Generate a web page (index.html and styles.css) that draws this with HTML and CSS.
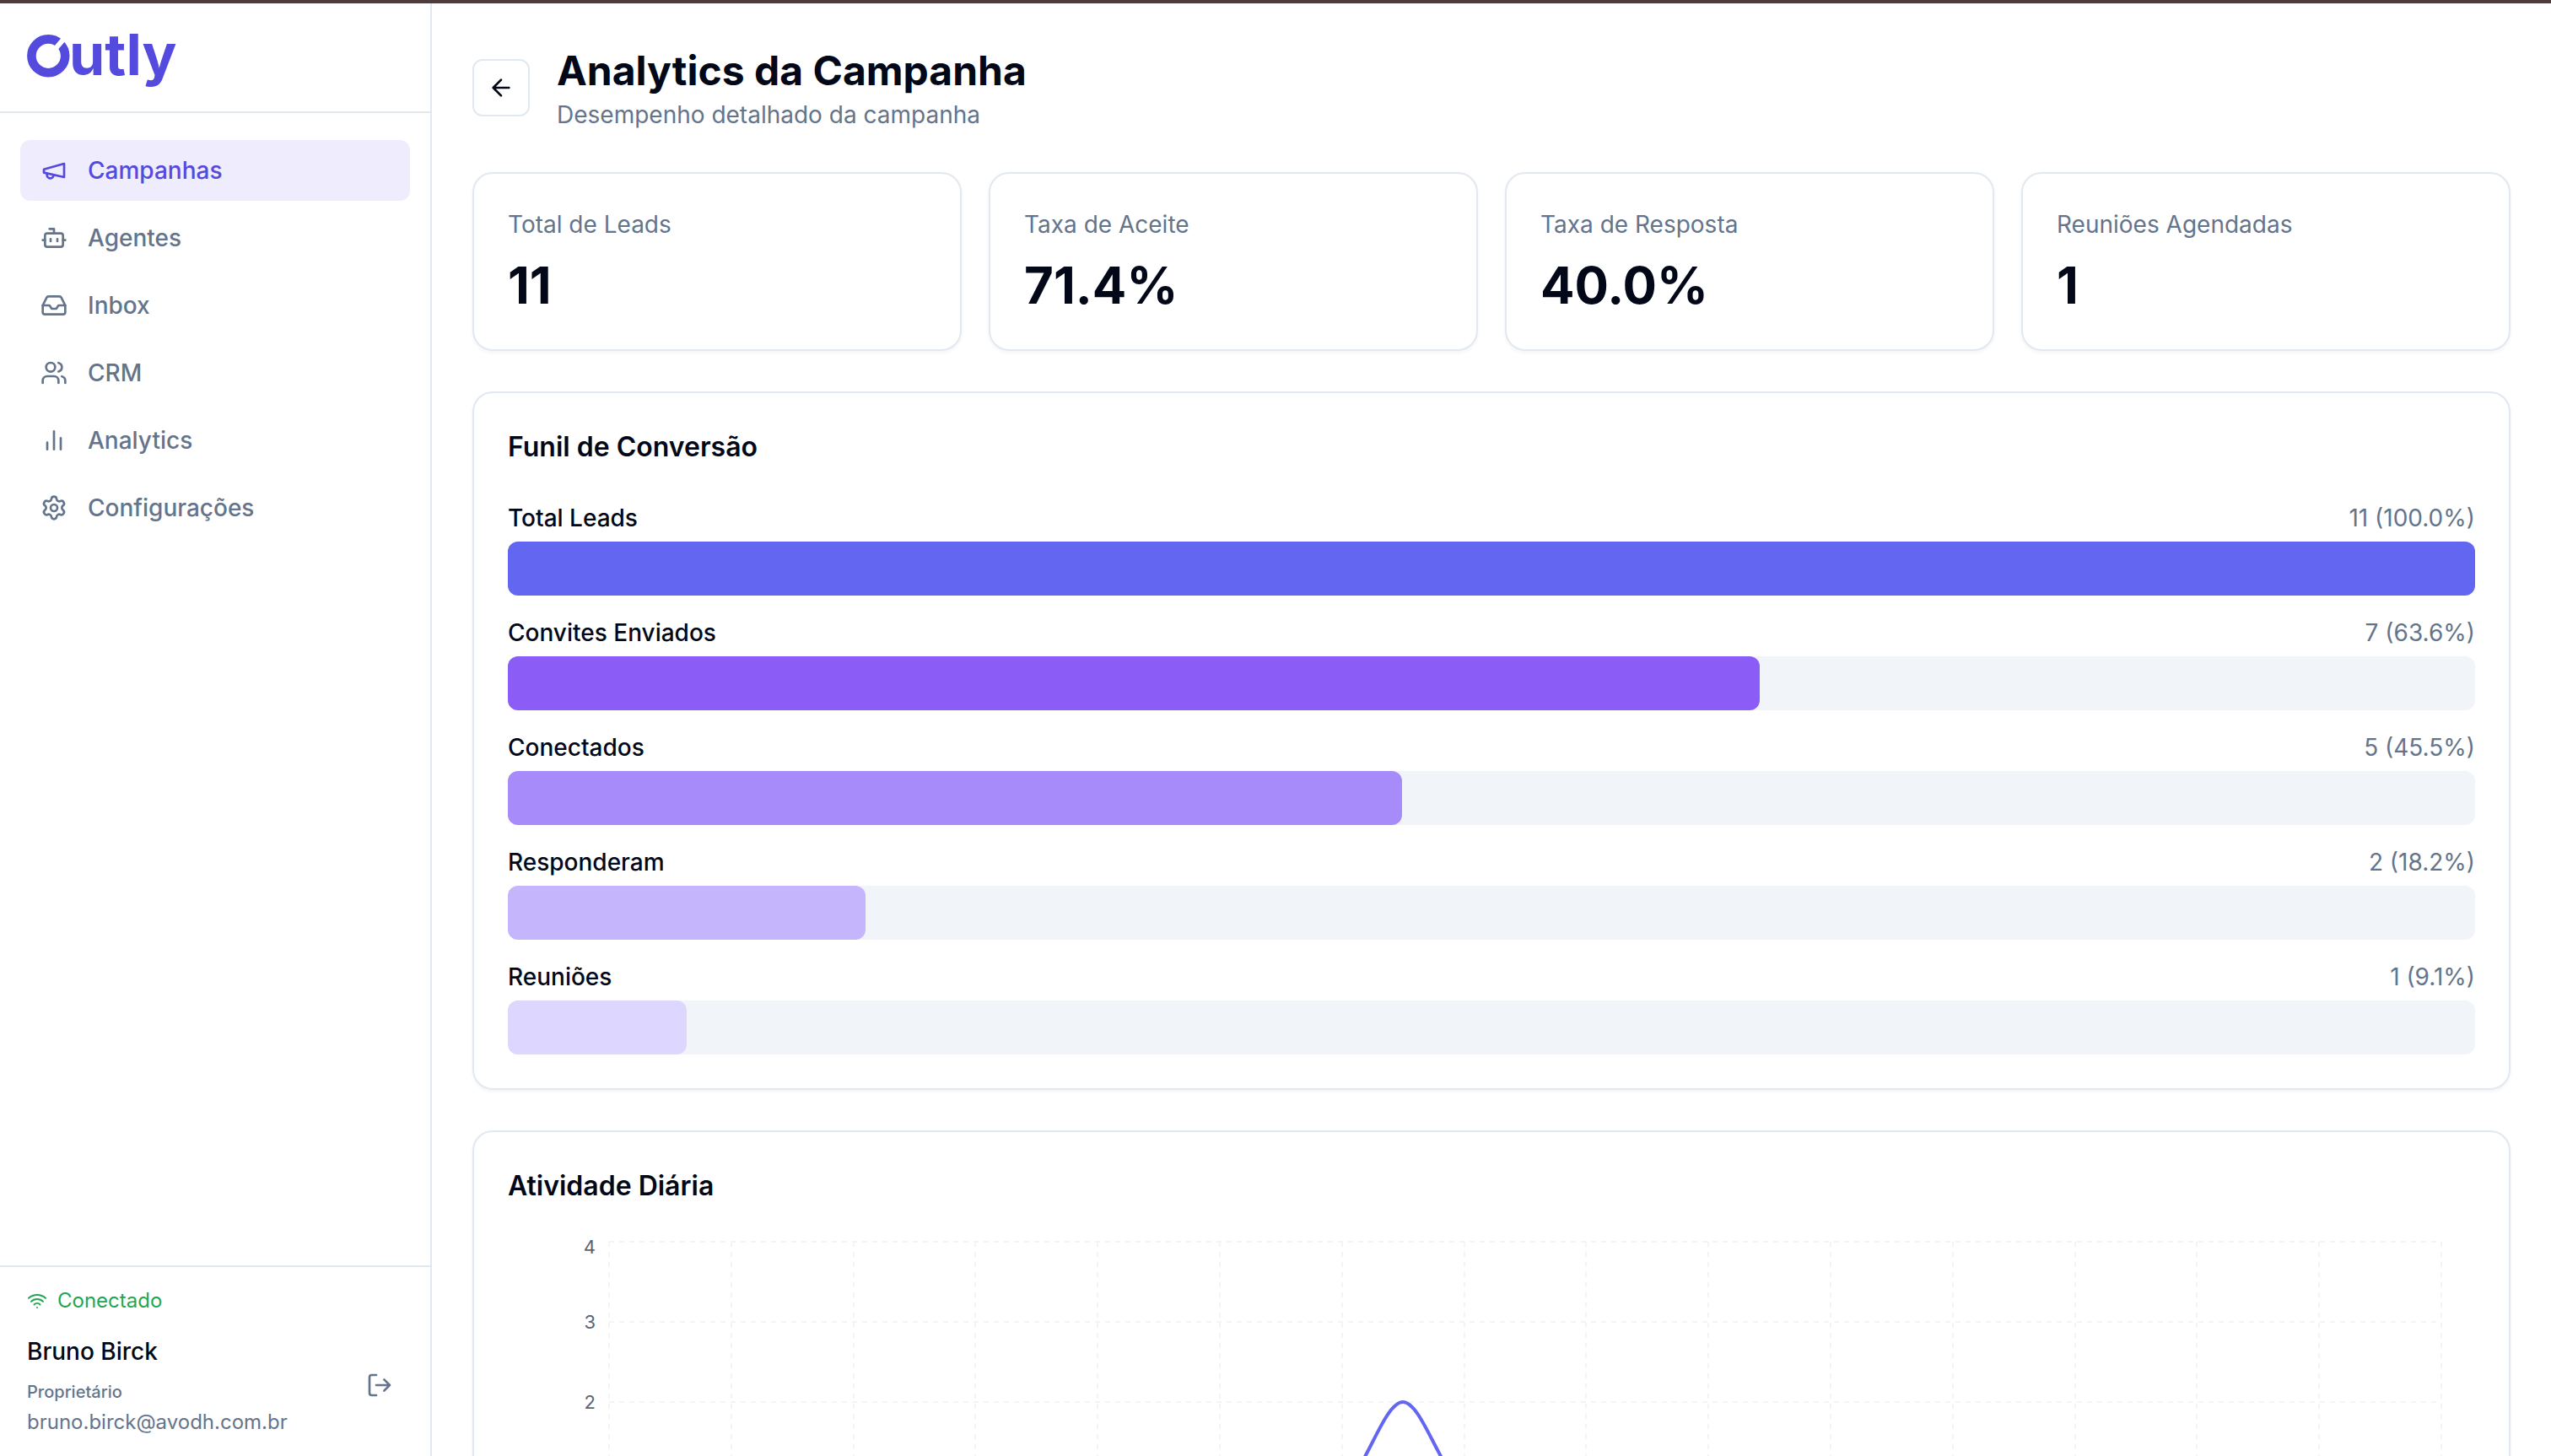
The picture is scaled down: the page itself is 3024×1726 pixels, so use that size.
FILE: index.html
```html
<!DOCTYPE html>
<html lang="pt-BR">
  <head>
    <meta charset="UTF-8" />
    <meta name="viewport" content="width=device-width, initial-scale=1.0" />
    <title>Outly</title>
    <link rel="stylesheet" href="styles.css">
  </head>
  <body>
    <aside class="sidebar">
      <div class="brand">
        <svg class="logo" viewBox="0 0 192 64">
          <circle class="logo-ring" cx="25.3" cy="30.3" r="19.9" />
          <path class="logo-cut" d="M33 22.5L45 8.5" />
          <text class="logo-text" x="50" y="53">utly</text>
        </svg>
      </div>

      <nav class="nav">
        <a href="#" class="nav-link active">
          <svg class="icon" viewBox="0 0 24 24"><path d="m3 11 18-5v12L3 14v-3z" /><path d="M11.6 16.8a3 3 0 1 1-5.8-1.6" /></svg>
          Campanhas
        </a>
        <a href="#" class="nav-link">
          <svg class="icon" viewBox="0 0 24 24"><path d="M12 8V4H8" /><rect width="16" height="12" x="4" y="8" rx="2" /><path d="M2 14h2M20 14h2M15 13v2M9 13v2" /></svg>
          Agentes
        </a>
        <a href="#" class="nav-link">
          <svg class="icon" viewBox="0 0 24 24"><path d="M22 12h-6l-2 3h-4l-2-3H2" /><path d="M5.45 5.11 2 12v6a2 2 0 0 0 2 2h16a2 2 0 0 0 2-2v-6l-3.45-6.89A2 2 0 0 0 16.76 4H7.24a2 2 0 0 0-1.79 1.11z" /></svg>
          Inbox
        </a>
        <a href="#" class="nav-link">
          <svg class="icon" viewBox="0 0 24 24"><path d="M16 21v-2a4 4 0 0 0-4-4H6a4 4 0 0 0-4 4v2" /><circle cx="9" cy="7" r="4" /><path d="M22 21v-2a4 4 0 0 0-3-3.87M16 3.13a4 4 0 0 1 0 7.75" /></svg>
          CRM
        </a>
        <a href="#" class="nav-link">
          <svg class="icon" viewBox="0 0 24 24"><path d="M18 20V10M12 20V4M6 20v-6" /></svg>
          Analytics
        </a>
        <a href="#" class="nav-link">
          <svg class="icon" viewBox="0 0 24 24"><path d="M9.671 4.136a2.34 2.34 0 0 1 4.659 0 2.34 2.34 0 0 0 3.319 1.915 2.34 2.34 0 0 1 2.33 4.033 2.34 2.34 0 0 0 0 3.831 2.34 2.34 0 0 1-2.33 4.033 2.34 2.34 0 0 0-3.319 1.915 2.34 2.34 0 0 1-4.659 0 2.34 2.34 0 0 0-3.32-1.915 2.34 2.34 0 0 1-2.33-4.033 2.34 2.34 0 0 0 0-3.831A2.34 2.34 0 0 1 6.35 6.051a2.34 2.34 0 0 0 3.319-1.915" /><circle cx="12" cy="12" r="3" /></svg>
          Configurações
        </a>
      </nav>

      <div class="account">
        <div class="status">
          <svg class="icon icon-sm" viewBox="0 0 24 24"><path d="M12 20h.01M2 8.82a15 15 0 0 1 20 0M5 12.859a10 10 0 0 1 14 0M8.5 16.429a5 5 0 0 1 7 0" /></svg>
          Conectado
        </div>
        <div class="user">
          <div>
            <p class="user-name">Bruno Birck</p>
            <p class="user-role">Proprietário</p>
            <p class="user-email">bruno.birck@avodh.com.br</p>
          </div>
          <button type="button" class="logout">
            <svg class="icon" viewBox="0 0 24 24"><path d="m16 17 5-5-5-5M21 12H9M9 21H5a2 2 0 0 1-2-2V5a2 2 0 0 1 2-2h4" /></svg>
          </button>
        </div>
      </div>
    </aside>

    <main class="content">
      <header class="page-header">
        <button type="button" class="back">
          <svg class="icon" viewBox="0 0 24 24"><path d="m12 19-7-7 7-7M19 12H5" /></svg>
        </button>
        <div>
          <h1>Analytics da Campanha</h1>
          <p class="muted">Desempenho detalhado da campanha</p>
        </div>
      </header>

      <section class="stats">
        <div class="card">
          <p class="muted">Total de Leads</p>
          <p class="stat-value">11</p>
        </div>
        <div class="card">
          <p class="muted">Taxa de Aceite</p>
          <p class="stat-value">71.4%</p>
        </div>
        <div class="card">
          <p class="muted">Taxa de Resposta</p>
          <p class="stat-value">40.0%</p>
        </div>
        <div class="card">
          <p class="muted">Reuniões Agendadas</p>
          <p class="stat-value">1</p>
        </div>
      </section>

      <section class="card">
        <h2>Funil de Conversão</h2>
        <div class="funnel">
          <div class="step">
            <div class="step-label"><span>Total Leads</span><span class="muted">11 (100.0%)</span></div>
            <div class="track"><div class="bar bar-leads" style="width: 100%"></div></div>
          </div>
          <div class="step">
            <div class="step-label"><span>Convites Enviados</span><span class="muted">7 (63.6%)</span></div>
            <div class="track"><div class="bar bar-invites" style="width: 63.64%"></div></div>
          </div>
          <div class="step">
            <div class="step-label"><span>Conectados</span><span class="muted">5 (45.5%)</span></div>
            <div class="track"><div class="bar bar-connected" style="width: 45.45%"></div></div>
          </div>
          <div class="step">
            <div class="step-label"><span>Responderam</span><span class="muted">2 (18.2%)</span></div>
            <div class="track"><div class="bar bar-replied" style="width: 18.18%"></div></div>
          </div>
          <div class="step">
            <div class="step-label"><span>Reuniões</span><span class="muted">1 (9.1%)</span></div>
            <div class="track"><div class="bar bar-meetings" style="width: 9.09%"></div></div>
          </div>
        </div>
      </section>

      <section class="card">
        <h2>Atividade Diária</h2>
        <svg class="chart" viewBox="0 0 2332 600">
          <!-- one grid column for every two days -->
          <path class="grid" d="M120 10H2292M120 105H2292M120 200H2292M120 295H2292M120 390H2292" />
          <path class="grid" d="M120 10V390M265 10V390M410 10V390M554 10V390M699 10V390M844 10V390M989 10V390M1134 10V390M1278 10V390M1423 10V390M1568 10V390M1713 10V390M1858 10V390M2002 10V390M2147 10V390M2292 10V390" />
          <text class="tick" x="104" y="24">4</text>
          <text class="tick" x="104" y="113">3</text>
          <text class="tick" x="104" y="208">2</text>
          <path class="line" d="M989 295C1013 295 1037 200 1061 200C1085 200 1109 295 1134 295" />
        </svg>
      </section>
    </main>
  </body>
</html>
```

FILE: styles.css
```css
* {
  box-sizing: border-box;
  margin: 0;
  padding: 0;
}
body {
  display: flex;
  height: 100vh;
  overflow: hidden;
  border-top: 4px solid #4f3b3b;
  background: #fff;
  color: #020817;
  font-family: Inter, "Liberation Sans", sans-serif;
  font-size: 28px;
  line-height: 40px;
}
button {
  display: flex;
  align-items: center;
  justify-content: center;
  background: none;
  border: none;
  cursor: pointer;
}
.icon {
  flex-shrink: 0;
  width: 32px;
  height: 32px;
  fill: none;
  stroke: currentColor;
  stroke-width: 2;
  stroke-linecap: round;
  stroke-linejoin: round;
}
.icon-sm {
  width: 24px;
  height: 24px;
}
.muted {
  color: #64748b;
  font-weight: 400;
}

/* sidebar */
.sidebar {
  display: flex;
  flex-direction: column;
  flex-shrink: 0;
  width: 512px;
  border-right: 2px solid #e2e8f0;
}
.brand {
  padding: 32px;
  border-bottom: 2px solid #e2e8f0;
}
.logo {
  display: block;
  height: 64px;
  overflow: visible;
}
.logo-ring {
  fill: none;
  stroke: #544add;
  stroke-width: 10.6;
}
.logo-cut {
  stroke: #fff;
  stroke-width: 6;
}
.logo-text {
  fill: #544add;
  font-size: 68px;
  font-weight: 700;
}
.nav {
  display: flex;
  flex: 1;
  flex-direction: column;
  gap: 8px;
  padding: 32px 24px;
}
.nav-link {
  display: flex;
  align-items: center;
  gap: 24px;
  padding: 16px 24px;
  border-radius: 12px;
  color: #64748b;
  font-weight: 500;
  text-decoration: none;
}
.nav-link.active {
  background: #eeecfd;
  color: #544add;
}
.account {
  padding: 24px 32px;
  border-top: 2px solid #e2e8f0;
}
.status {
  display: flex;
  align-items: center;
  gap: 12px;
  margin-bottom: 24px;
  color: #22a652;
  font-size: 24px;
  line-height: 32px;
}
.user {
  display: flex;
  align-items: center;
  justify-content: space-between;
}
.user-name {
  font-weight: 500;
}
.user-role {
  margin-top: 8px;
  color: #64748b;
  font-size: 20px;
  font-weight: 500;
}
.user-email {
  color: #64748b;
  font-size: 24px;
  line-height: 32px;
}
.logout {
  width: 56px;
  height: 56px;
  color: #64748b;
}

/* page */
.content {
  display: flex;
  flex: 1;
  flex-direction: column;
  gap: 48px;
  min-width: 0;
  padding: 48px;
  overflow-y: auto;
  scrollbar-width: none;
}
.page-header {
  display: flex;
  align-items: center;
  gap: 32px;
}
.back {
  width: 68px;
  height: 68px;
  border: 2px solid #e2e8f0;
  border-radius: 12px;
  color: #020817;
}
h1 {
  font-size: 48px;
  font-weight: 700;
  line-height: 64px;
}
h2 {
  font-size: 32px;
  font-weight: 600;
  line-height: 48px;
}
.stats {
  display: grid;
  grid-template-columns: repeat(4, 1fr);
  gap: 32px;
}
.card {
  padding: 40px;
  border: 2px solid #e2e8f0;
  border-radius: 24px;
  box-shadow: 0 2px 4px rgba(0, 0, 0, 0.05);
}
.stat-value {
  margin-top: 16px;
  font-size: 60px;
  font-weight: 700;
  line-height: 72px;
}

/* funnel */
.funnel {
  display: flex;
  flex-direction: column;
  gap: 24px;
  margin-top: 40px;
}
.step-label {
  display: flex;
  justify-content: space-between;
  margin-bottom: 8px;
  font-weight: 500;
}
.track {
  height: 64px;
  border-radius: 12px;
  background: #f1f5f9;
}
.bar {
  height: 100%;
  border-radius: 12px;
}
.bar-leads {
  background: #6366f1;
}
.bar-invites {
  background: #8b5cf6;
}
.bar-connected {
  background: #a78bfa;
}
.bar-replied {
  background: #c4b5fd;
}
.bar-meetings {
  background: #ddd6fe;
}

/* daily activity */
.chart {
  display: block;
  width: 100%;
  margin-top: 32px;
}
.grid {
  fill: none;
  stroke: #f1f5f9;
  stroke-width: 2;
  stroke-dasharray: 6 6;
}
.tick {
  fill: #5b6472;
  font-size: 22px;
  text-anchor: end;
}
.line {
  fill: none;
  stroke: #6366f1;
  stroke-width: 4;
}
```
